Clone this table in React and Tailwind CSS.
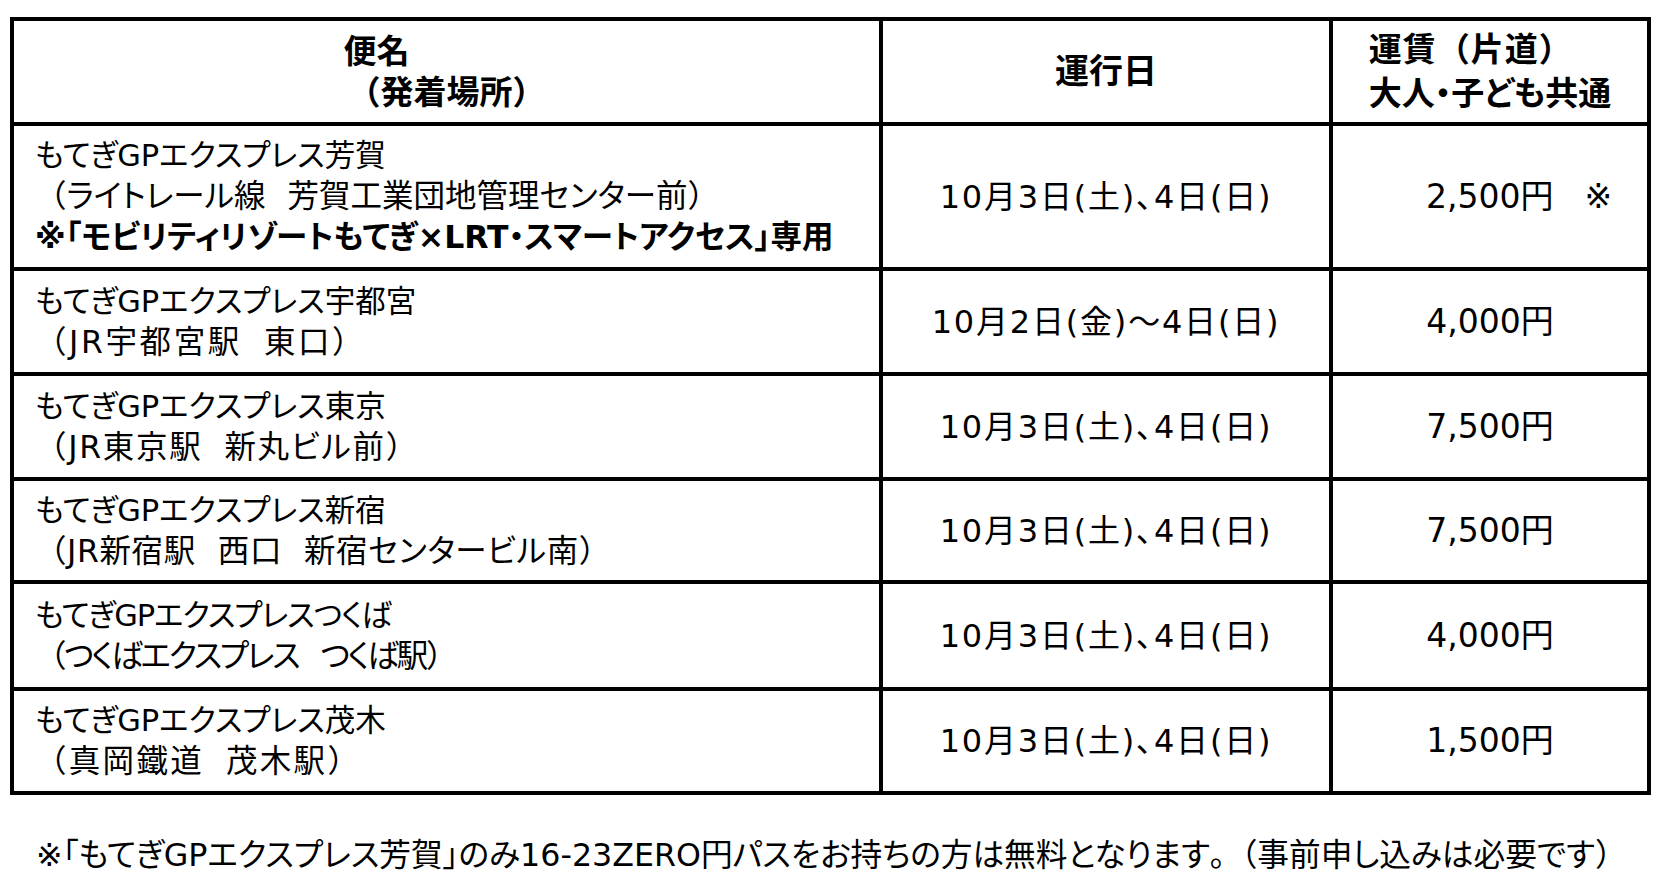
import React from "react";

const FONT = {
  fontFamily: '"DejaVu Sans", "Noto Sans CJK JP", sans-serif',
};

// full-width punctuation keeps its natural width, the rest uses proportional kana
const Full = ( { children } ) => (
  <span className="[font-feature-settings:normal]">{children}</span>
);

// ideographic space rendered a bit narrower, like the source font
const Gap = () => <span className="inline-block w-[22px]" />;

const rows = [
  {
    name: "もてぎGPエクスプレス芳賀",
    place: ["ライトレール線", "芳賀工業団地管理センター前"],
    note: "※「モビリティリゾートもてぎ×LRT・スマートアクセス」専用",
    date: "10月3日(土)、4日(日)",
    price: "2,500円",
    mark: true,
    h: "h-[145px]",
  },
  {
    name: "もてぎGPエクスプレス宇都宮",
    place: ["JR宇都宮駅", "東口"],
    track: "tracking-[2.6px]",
    date: "10月2日(金)～4日(日)",
    price: "4,000円",
    h: "h-[105px]",
  },
  {
    name: "もてぎGPエクスプレス東京",
    place: ["JR東京駅", "新丸ビル前"],
    track: "tracking-[1.7px]",
    date: "10月3日(土)、4日(日)",
    price: "7,500円",
    h: "h-[105px]",
  },
  {
    name: "もてぎGPエクスプレス新宿",
    place: ["JR新宿駅", "西口", "新宿センタービル南"],
    track: "tracking-[0.6px]",
    date: "10月3日(土)、4日(日)",
    price: "7,500円",
    h: "h-[103px]",
  },
  {
    name: "もてぎGPエクスプレスつくば",
    nameTrack: "tracking-[-1px]",
    place: ["つくばエクスプレス", "つくば駅"],
    track: "tracking-[-2.2px]",
    date: "10月3日(土)、4日(日)",
    price: "4,000円",
    h: "h-[107px]",
  },
  {
    name: "もてぎGPエクスプレス茂木",
    place: ["真岡鐵道", "茂木駅"],
    track: "tracking-[2.3px]",
    date: "10月3日(土)、4日(日)",
    price: "1,500円",
    h: "h-[104px]",
  },
];

const cell = "border-r-4 border-b-4 border-black flex items-center";

export default function App() {
  return (
    <div
      className="min-h-screen bg-white text-black pt-[17px] pl-[10px] [font-feature-settings:'palt']"
      style={FONT}
    >
      {/* table */}
      <div className="grid grid-cols-[869px_450px_318px] w-[1641px] border-l-4 border-t-4 border-black">
        {/* header */}
        <div className={`${cell} h-[105px] justify-center font-bold text-[33px] leading-[41px]`}>
          <div className="text-center">
            <div className="pr-[140px]">便名</div>
            <div>
              <Full>（</Full>発着場所<Full>）</Full>
            </div>
          </div>
        </div>
        <div className={`${cell} h-[105px] justify-center font-bold text-[34px]`}>
          運行日
        </div>
        <div className={`${cell} h-[105px] justify-center font-bold text-[33px] leading-[44px]`}>
          <div className="text-left">
            <div className="tracking-[1px]">
              運賃<Full>（</Full>片道<Full>）</Full>
            </div>
            <div>大人・子ども共通</div>
          </div>
        </div>

        {rows.map( ( r, i ) => (
          <React.Fragment key={i}>
            <div className={`${cell} ${r.h} pl-[21px] text-[31.5px] leading-[41px]`}>
              <div>
                <div className={`text-[30.5px] ${r.nameTrack || ""}`}>{r.name}</div>
                <div className={r.track}>
                  <Full>（</Full>
                  {r.place.map( ( p, j ) => (
                    <React.Fragment key={j}>
                      {j > 0 && <Gap />}
                      {p}
                    </React.Fragment>
                  ) )}
                  <Full>）</Full>
                </div>
                {r.note && <div className="font-bold">{r.note}</div>}
              </div>
            </div>
            <div className={`${cell} ${r.h} justify-center text-[32px] tracking-[1.8px]`}>
              {r.date}
            </div>
            <div className={`${cell} ${r.h} justify-center text-[33px]`}>
              {r.mark ? (
                <span className="pl-[58px]">
                  {r.price}
                  <span className="ml-[31px]">※</span>
                </span>
              ) : (
                r.price
              )}
            </div>
          </React.Fragment>
        ) )}
      </div>

      {/* footnote */}
      <p className="mt-[39px] pl-[26px] text-[31.7px] leading-[42px] whitespace-nowrap">
        ※「もてぎGPエクスプレス芳賀」のみ16-23ZERO円パスをお持ちの方は無料となります<Full>。（</Full>事前申し込みは必要です<Full>）</Full>
      </p>
    </div>
  );
}
